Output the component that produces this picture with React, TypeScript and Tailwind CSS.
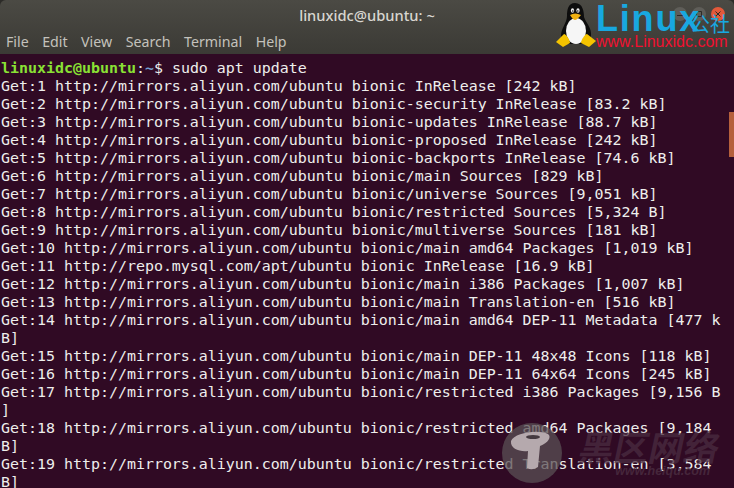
const LINES = [
  'Get:1 http://mirrors.aliyun.com/ubuntu bionic InRelease [242 kB]',
  'Get:2 http://mirrors.aliyun.com/ubuntu bionic-security InRelease [83.2 kB]',
  'Get:3 http://mirrors.aliyun.com/ubuntu bionic-updates InRelease [88.7 kB]',
  'Get:4 http://mirrors.aliyun.com/ubuntu bionic-proposed InRelease [242 kB]',
  'Get:5 http://mirrors.aliyun.com/ubuntu bionic-backports InRelease [74.6 kB]',
  'Get:6 http://mirrors.aliyun.com/ubuntu bionic/main Sources [829 kB]',
  'Get:7 http://mirrors.aliyun.com/ubuntu bionic/universe Sources [9,051 kB]',
  'Get:8 http://mirrors.aliyun.com/ubuntu bionic/restricted Sources [5,324 B]',
  'Get:9 http://mirrors.aliyun.com/ubuntu bionic/multiverse Sources [181 kB]',
  'Get:10 http://mirrors.aliyun.com/ubuntu bionic/main amd64 Packages [1,019 kB]',
  'Get:11 http://repo.mysql.com/apt/ubuntu bionic InRelease [16.9 kB]',
  'Get:12 http://mirrors.aliyun.com/ubuntu bionic/main i386 Packages [1,007 kB]',
  'Get:13 http://mirrors.aliyun.com/ubuntu bionic/main Translation-en [516 kB]',
  'Get:14 http://mirrors.aliyun.com/ubuntu bionic/main amd64 DEP-11 Metadata [477 k',
  'B]',
  'Get:15 http://mirrors.aliyun.com/ubuntu bionic/main DEP-11 48x48 Icons [118 kB]',
  'Get:16 http://mirrors.aliyun.com/ubuntu bionic/main DEP-11 64x64 Icons [245 kB]',
  'Get:17 http://mirrors.aliyun.com/ubuntu bionic/restricted i386 Packages [9,156 B',
  ']',
  'Get:18 http://mirrors.aliyun.com/ubuntu bionic/restricted amd64 Packages [9,184',
  'B]',
  'Get:19 http://mirrors.aliyun.com/ubuntu bionic/restricted Translation-en [3,584',
  'B]',
];

const MENUS = ['File', 'Edit', 'View', 'Search', 'Terminal', 'Help'];

function Penguin() {
  return (
    <svg width="40" height="46" viewBox="0 0 40 46" className="shrink-0">
      <path d="M19 1 C27 1 28 10 28 15 C30 21 36 26 35 34 L32 42 L9 42 L5 34 C5 26 11 21 11 14 C11 8 12 1 19 1 Z" fill="#0d0d0d" />
      <ellipse cx="20" cy="29" rx="10" ry="13" fill="#f6f6f6" />
      <path d="M14 13 Q19 10 25 13 Q21 18 19 18 Q17 18 14 13 Z" fill="#f0b010" />
      <ellipse cx="16.5" cy="8.5" rx="1.6" ry="2.2" fill="#eee" />
      <ellipse cx="22" cy="8.5" rx="1.6" ry="2.2" fill="#eee" />
      <circle cx="16.8" cy="9" r="0.8" fill="#111" />
      <circle cx="21.8" cy="9" r="0.8" fill="#111" />
      <path d="M0 40 L8 32 C10 32 14 38 14 41 L7 45 Z" fill="#f5c400" />
      <path d="M40 39 L31 32 C29 32 25 38 25 41 L33 45 Z" fill="#f5c400" />
    </svg>
  );
}

function WindowButton({ color, glyph }: { color: string; glyph: string }) {
  return (
    <div className={`flex h-[14px] w-[14px] items-center justify-center rounded-full ${color}`}>
      <svg width="10" height="10" viewBox="0 0 10 10" fill="none" stroke="#2c2b28" strokeWidth="1">
        <path d={glyph} />
      </svg>
    </div>
  );
}

export default function App() {
  return (
    <div className="relative h-[488px] w-[734px] overflow-hidden bg-[#2c2b28] font-['DejaVu_Sans_Mono',monospace]">
      <div className="h-[54px] rounded-t-[6px] bg-gradient-to-b from-[#4b4a44] to-[#3b3a35]">
        <div className="grid h-[31px] grid-cols-[1fr_auto_1fr] px-[9px] pt-[6px] font-['Noto_Sans',sans-serif] text-[14.7px] font-medium leading-[18px] text-[#d8d6d0]">
          <div />
          <span>linuxidc@ubuntu: ~</span>
          <div className="flex justify-end gap-[5px] pt-px">
            <WindowButton color="bg-[#5f5e59]" glyph="M2 6.5 H8" />
            <WindowButton color="bg-[#5f5e59]" glyph="M2.5 2.5 H7.5 V7.5 H2.5 Z" />
            <WindowButton color="bg-[#e2593a]" glyph="M2.5 2.5 L7.5 7.5 M7.5 2.5 L2.5 7.5" />
          </div>
        </div>
        <div className="flex gap-[13.5px] pl-[6px] font-['Noto_Sans',sans-serif] text-[14.2px] leading-[22px] text-[#c4c2bc]">
          {MENUS.map((m) => (
            <span key={m}>{m}</span>
          ))}
        </div>
      </div>

      <div className="h-[434px] bg-[#300a24] pl-px pt-[5px] text-[14.95px] leading-[18px] whitespace-pre text-[#eeeeec]">
        <div>
          <span className="font-bold text-[#8ae234]">linuxidc@ubuntu</span>:
          <span className="font-bold text-[#729fcf]">~</span>$ sudo apt update
        </div>
        {LINES.map((line, i) => (
          <div key={i}>{line}</div>
        ))}
      </div>

      {/* scrollbar thumb */}
      <div className="absolute right-0 top-[112px] h-[45px] w-[5px] bg-[#b5603c]" />

      {/* linuxidc logo, pasted over the title bar */}
      <div className="absolute left-[556px] top-[2px] flex">
        <Penguin />
        <div className="flex w-[138px] flex-col pt-[1px]">
          <div className="flex items-end whitespace-nowrap">
            <span className="font-['Liberation_Sans',sans-serif] text-[36px] font-bold leading-[31px] tracking-[1.8px] text-[#18a8e0]">
              Linux
            </span>
            <span className="-ml-[11px] font-['Noto_Sans_CJK_SC',sans-serif] text-[20px] leading-[20px] text-[#18a8e0]">
              公社
            </span>
          </div>
          <span className="whitespace-nowrap font-['Liberation_Sans',sans-serif] text-[16px] leading-[16px] text-[#f01030]">
            www.Linuxidc.com
          </span>
        </div>
      </div>

      {/* heiqu watermark */}
      <div className="absolute bottom-[5px] left-[502px] flex gap-[16px]">
        <div className="h-[60px] w-[60px] shrink-0 rounded-full bg-[#5a5054]/75">
          <svg width="60" height="60" viewBox="0 0 60 60">
            <path d="M9 18 C12 10 36 6 46 11 C50 14 46 20 38 23 L36 44 Q30 48 25 45 L26 28 C18 29 8 26 9 18 Z" fill="#b5a9ad" />
            <ellipse cx="31" cy="14" rx="7" ry="2" fill="#453a40" />
          </svg>
        </div>
        <div className="flex w-[142px] flex-col items-end pt-[5px]">
          <span className="-skew-x-12 whitespace-nowrap font-['Noto_Sans_CJK_SC',sans-serif] text-[35px] font-bold leading-[36px] text-[#4a2c40]/75">
            黑区网络
          </span>
          <span className="pr-[10px] whitespace-nowrap font-['Liberation_Sans',sans-serif] text-[12.5px] font-bold italic leading-[14px] text-[#4a2c40]/85">
            www.heiqu.com
          </span>
        </div>
      </div>
    </div>
  );
}
